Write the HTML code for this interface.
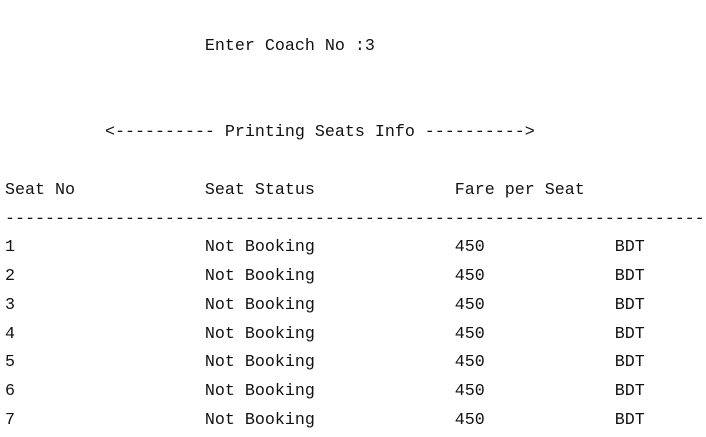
<!DOCTYPE html>
<html><head><meta charset="utf-8"><style>
html,body{margin:0;padding:0;background:#fff;width:706px;height:437px;overflow:hidden}
pre{margin:0;padding:33px 0 0 5px;font-family:"Liberation Mono","DejaVu Sans Mono",monospace;font-size:16.667px;line-height:28.75px;color:#111;white-space:pre}
</style></head><body><pre>                    Enter Coach No :3


          &lt;---------- Printing Seats Info ----------&gt;

Seat No             Seat Status              Fare per Seat
----------------------------------------------------------------------
1                   Not Booking              450             BDT
2                   Not Booking              450             BDT
3                   Not Booking              450             BDT
4                   Not Booking              450             BDT
5                   Not Booking              450             BDT
6                   Not Booking              450             BDT
7                   Not Booking              450             BDT</pre></body></html>
